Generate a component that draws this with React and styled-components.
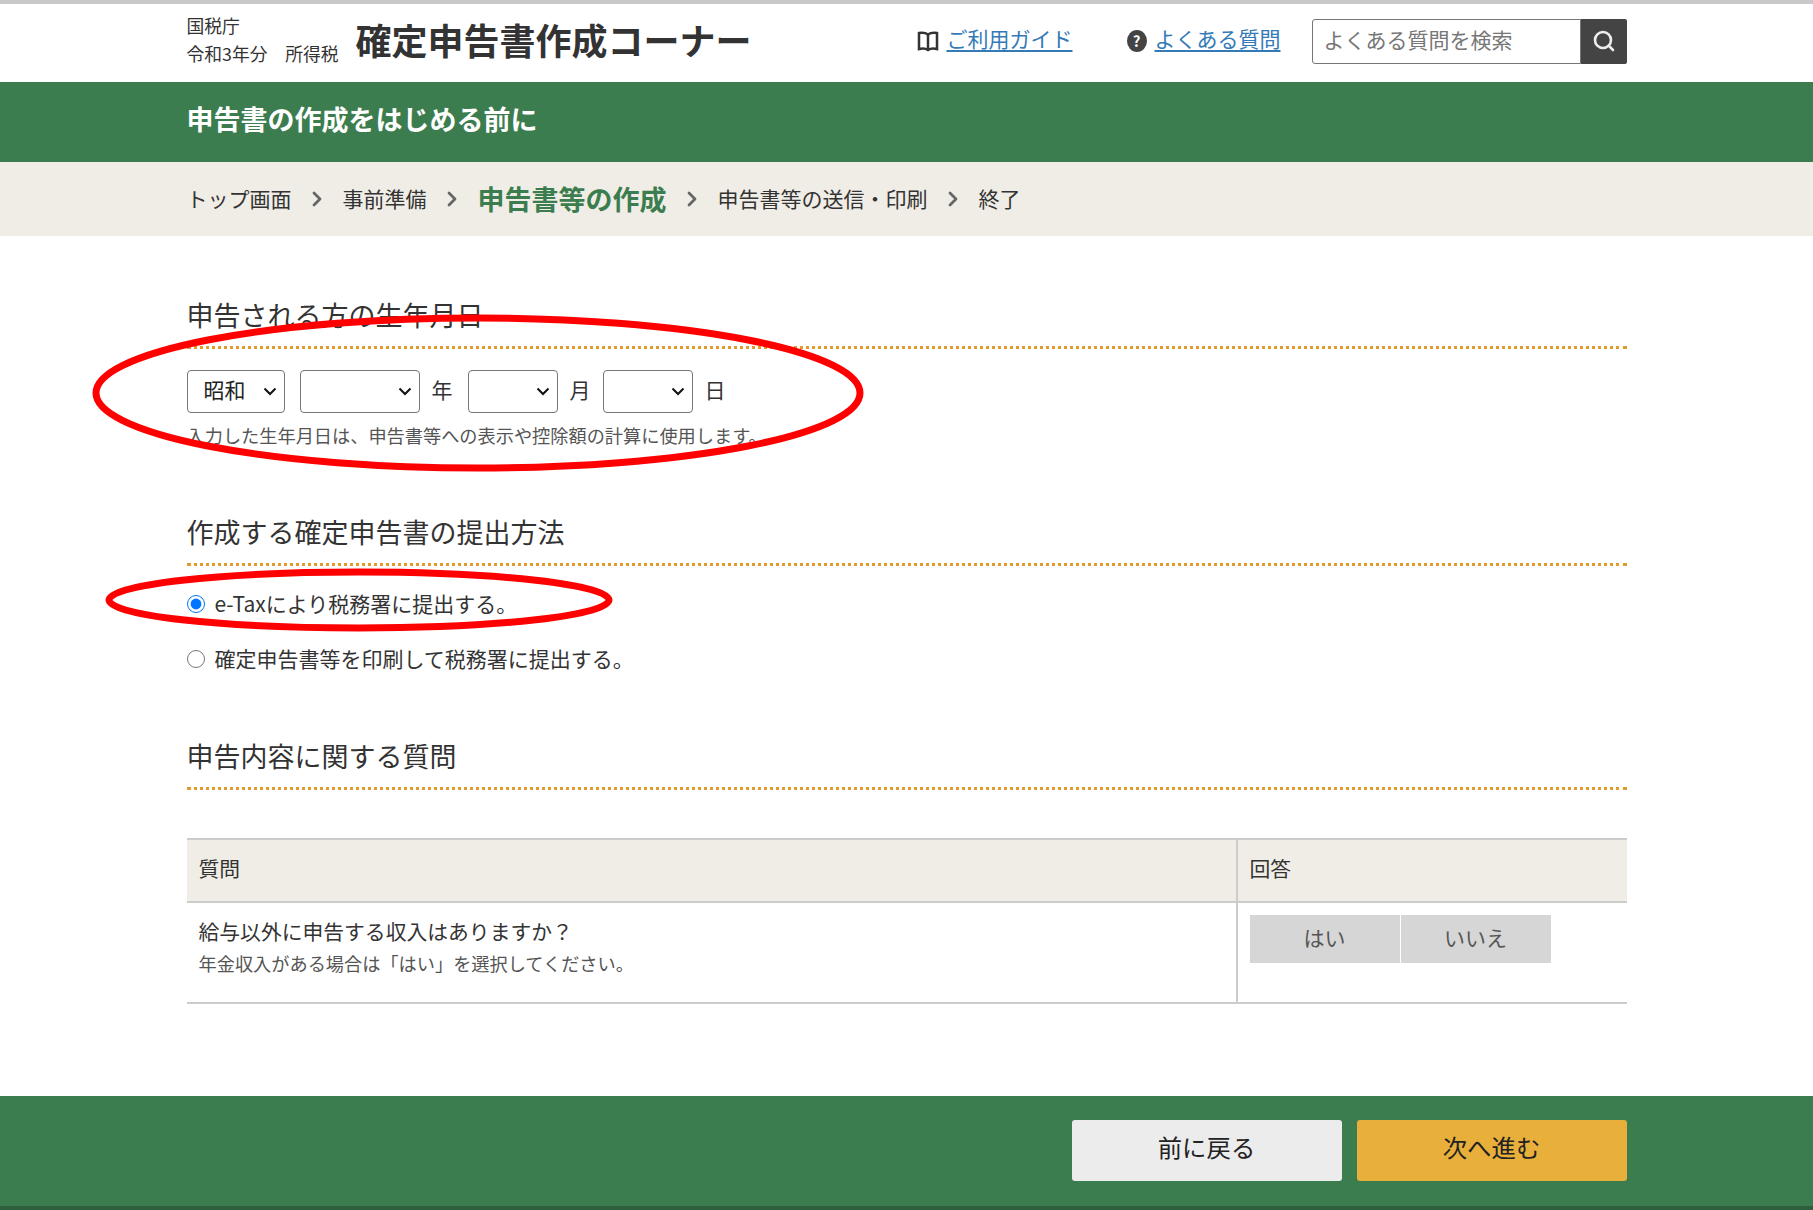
import React from 'react';
import styled, { createGlobalStyle } from 'styled-components';
import { ChevronRight, Search } from 'lucide-react';

const GlobalStyle = createGlobalStyle`
  html, body {
    margin: 0;
    padding: 0;
    background: #fff;
    color: #333;
    font-family: "Noto Sans CJK JP", "Noto Sans", sans-serif;
  }
  * { box-sizing: border-box; }
`;

const selectArrow = encodeURIComponent(
  '<svg xmlns="http://www.w3.org/2000/svg" width="14" height="9" viewBox="0 0 14 9"><path d="M1.500 1.500L7 7L12.500 1.500" fill="none" stroke="#111" stroke-width="2"/></svg>'
);

const Page = styled.div`
  position: relative;
  width: 1813px;
  height: 1210px;
  overflow: hidden;
  display: flex;
  flex-direction: column;
  border-top: 4px solid #c9c9c9;
`;

const Inner = styled.div`
  width: 1440px;
  margin: 0 auto;
`;

const HeaderBar = styled(Inner)`
  height: 78px;
  padding-bottom: 4px;
  display: flex;
  align-items: center;
`;

const Agency = styled.div`
  width: 169px;
  margin-bottom: 4px;
  font-size: 17.8px;
  line-height: 28px;
  white-space: pre;
  color: #333;
`;

const SiteTitle = styled.div`
  margin-bottom: 3px;
  font-size: 36px;
  font-weight: 700;
  line-height: 1.2;
  color: #333;
  white-space: nowrap;
`;

const HeaderLinks = styled.div`
  margin-left: auto;
  display: flex;
  align-items: center;
`;

const GuideLink = styled.a`
  display: flex;
  align-items: center;
  gap: ${(p) => p.$iconGap}px;
  margin-right: ${(p) => p.$gap}px;
  padding-bottom: 6px;
  font-size: 21px;
  line-height: 30px;
  color: #337ab7;

  span {
    text-decoration: underline;
    text-underline-offset: 3px;
    text-decoration-thickness: 2px;
  }

  svg, i {
    position: relative;
    top: 3px;
  }
`;

const HelpBadge = styled.i`
  width: 20px;
  height: 22px;
  border-radius: 50%;
  background: #444;
  color: #fff;
  font-size: 15px;
  font-style: normal;
  font-weight: 700;
  line-height: 21px;
  text-align: center;
`;

const SearchBox = styled.div`
  display: flex;
  height: 45px;
`;

const SearchInput = styled.input`
  width: 269px;
  height: 45px;
  padding: 0 11px 5px;
  border: 1px solid #767676;
  border-radius: 3px 0 0 3px;
  font: inherit;
  font-size: 21px;
  color: #333;

  &::placeholder {
    color: #777;
    opacity: 1;
  }
`;

const SearchButton = styled.button`
  width: 46px;
  height: 45px;
  padding: 0;
  border: 0;
  border-radius: 0 2px 2px 0;
  background: #444;
  color: #eee;
  display: flex;
  align-items: center;
  justify-content: center;
`;

const TitleBand = styled.div`
  height: 80px;
  background: #3c7d50;
  color: #fff;
`;

const BandInner = styled(Inner)`
  height: 100%;
  padding-bottom: 8px;
  display: flex;
  align-items: center;
  font-size: 27px;
  font-weight: 700;
`;

const CrumbBand = styled.div`
  height: 74px;
  background: #f0ede6;
`;

const CrumbRow = styled(Inner)`
  height: 100%;
  padding-bottom: 2px;
  display: flex;
  align-items: center;
  gap: 13.5px;
  font-size: 21px;
`;

const Crumb = styled.span`
  color: ${(p) => (p.$active ? '#3c7d50' : '#333')};
  font-size: ${(p) => (p.$active ? '27px' : '21px')};
  font-weight: ${(p) => (p.$active ? 700 : 400)};
  white-space: nowrap;
`;

const CrumbArrow = styled(ChevronRight)`
  color: #666;
  flex: none;
  position: relative;
  top: 1px;
`;

const Main = styled(Inner)`
  flex: 1;
  padding-top: 60px;
`;

const Section = styled.section`
  margin-bottom: ${(p) => p.$after}px;
`;

const Heading = styled.h2`
  margin: 0;
  height: 53px;
  padding-bottom: 13px;
  border-bottom: 3px dotted #e09a2e;
  font-size: 27px;
  font-weight: 400;
  line-height: 37px;
  color: #333;
`;

const DateRow = styled.div`
  display: flex;
  align-items: center;
  margin-top: 21px;
`;

const DateSelect = styled.select`
  appearance: none;
  width: ${(p) => p.$w}px;
  height: 43px;
  margin-right: ${(p) => p.$mr}px;
  padding: 0 0 6px 16px;
  border: 1px solid #767676;
  border-radius: 4px;
  background: #fff url("data:image/svg+xml,${selectArrow}") no-repeat right 7px center;
  font: inherit;
  font-size: 21px;
  color: #222;
`;

const DateUnit = styled.span`
  margin-right: ${(p) => p.$mr}px;
  padding-bottom: 6px;
  font-size: 21px;
`;

const Note = styled.p`
  margin: ${(p) => p.$top}px 0 0;
  font-size: 18.2px;
  line-height: 26px;
  color: #555;
`;

const RadioRow = styled.label`
  display: flex;
  align-items: center;
  height: 55px;
  font-size: 21px;
  color: #333;

  input {
    width: 18px;
    height: 18px;
    margin: 0 10px 0 0;
  }

  span {
    margin-bottom: 2px;
  }
`;

const RadioList = styled.div`
  margin-top: 10px;
`;

const QuestionTable = styled.div`
  display: grid;
  grid-template-columns: 1049px 1fr;
  margin-top: 48px;
  border-top: 2px solid #ccc;
  border-bottom: 2px solid #ccc;
`;

const HeadCell = styled.div`
  height: 63px;
  padding: 0 12px 5px;
  display: flex;
  align-items: center;
  background: #f0ede6;
  border-bottom: 2px solid #ccc;
  font-size: 20.8px;
  border-left: ${(p) => (p.$divider ? '2px solid #ccc' : '0')};
`;

const BodyCell = styled.div`
  height: 99px;
  padding: 12px;
  border-left: ${(p) => (p.$divider ? '2px solid #ccc' : '0')};
`;

const QuestionText = styled.div`
  font-size: 20.8px;
  line-height: 32px;
`;

const QuestionNote = styled.div`
  margin-top: 1px;
  font-size: 18.2px;
  line-height: 30px;
  color: #555;
`;

const AnswerGroup = styled.div`
  display: flex;
  gap: 1px;
`;

const AnswerButton = styled.button`
  width: 150px;
  height: 48px;
  border: 0;
  padding: 0 0 4px;
  background: #d6d6d6;
  color: #555;
  font: inherit;
  font-size: 21px;
`;

const Footer = styled.div`
  height: 114px;
  background: #3c7d50;
  border-bottom: 4px solid #2e5e3c;
`;

const FooterRow = styled(Inner)`
  height: 100%;
  display: flex;
  justify-content: flex-end;
  align-items: flex-start;
  gap: 15px;
  padding-top: 24px;
`;

const FooterButton = styled.button`
  width: 270px;
  height: 61px;
  padding: 0 0 8px;
  border: 0;
  border-radius: 3px;
  background: ${(p) => (p.$primary ? '#e9af3b' : '#ececec')};
  color: #222;
  font: inherit;
  font-size: 24.4px;
`;

const Annotations = styled.svg`
  position: absolute;
  left: 0;
  top: -4px;
  pointer-events: none;
`;

const BookIcon = () => (
  <svg width="22" height="22" viewBox="0 0 22 22" fill="none" stroke="#333" strokeWidth="2.5">
    <path d="M11 4.500C9 3 5.500 2.500 2 3V19C5.500 18 9 18.500 11 20C13 18.500 16.500 18 20 19V3C16.500 2.500 13 3 11 4.500Z" />
    <path d="M11 4.500V20" />
  </svg>
);

export default function App() {
  return (
    <Page>
      <GlobalStyle />
      <HeaderBar>
        <Agency>{'国税庁\n令和3年分　所得税'}</Agency>
        <SiteTitle>確定申告書作成コーナー</SiteTitle>
        <HeaderLinks>
          <GuideLink $gap={54} $iconGap={8}>
            <BookIcon />
            <span>ご利用ガイド</span>
          </GuideLink>
          <GuideLink $gap={31} $iconGap={8}>
            <HelpBadge>?</HelpBadge>
            <span>よくある質問</span>
          </GuideLink>
          <SearchBox>
            <SearchInput placeholder="よくある質問を検索" />
            <SearchButton>
              <Search size={24} strokeWidth={2.6} />
            </SearchButton>
          </SearchBox>
        </HeaderLinks>
      </HeaderBar>

      <TitleBand>
        <BandInner>申告書の作成をはじめる前に</BandInner>
      </TitleBand>

      <CrumbBand>
        <CrumbRow>
          <Crumb>トップ画面</Crumb>
          <CrumbArrow size={24} strokeWidth={2.8} />
          <Crumb>事前準備</Crumb>
          <CrumbArrow size={24} strokeWidth={2.8} />
          <Crumb $active>申告書等の作成</Crumb>
          <CrumbArrow size={24} strokeWidth={2.8} />
          <Crumb>申告書等の送信・印刷</Crumb>
          <CrumbArrow size={24} strokeWidth={2.8} />
          <Crumb>終了</Crumb>
        </CrumbRow>
      </CrumbBand>

      <Main>
        <Section $after={65}>
          <Heading>申告される方の生年月日</Heading>
          <DateRow>
            <DateSelect $w={98} $mr={15} defaultValue="昭和">
              <option>昭和</option>
              <option>平成</option>
            </DateSelect>
            <DateSelect $w={120} $mr={12}>
              <option></option>
            </DateSelect>
            <DateUnit $mr={15}>年</DateUnit>
            <DateSelect $w={90} $mr={12}>
              <option></option>
            </DateSelect>
            <DateUnit $mr={12}>月</DateUnit>
            <DateSelect $w={90} $mr={12}>
              <option></option>
            </DateSelect>
            <DateUnit $mr={0}>日</DateUnit>
          </DateRow>
          <Note $top={9}>入力した生年月日は、申告書等への表示や控除額の計算に使用します。</Note>
        </Section>

        <Section $after={51}>
          <Heading>作成する確定申告書の提出方法</Heading>
          <RadioList>
            <RadioRow>
              <input type="radio" name="method" defaultChecked />
              <span>e-Taxにより税務署に提出する。</span>
            </RadioRow>
            <RadioRow>
              <input type="radio" name="method" />
              <span>確定申告書等を印刷して税務署に提出する。</span>
            </RadioRow>
          </RadioList>
        </Section>

        <Section $after={0}>
          <Heading>申告内容に関する質問</Heading>
          <QuestionTable>
            <HeadCell>質問</HeadCell>
            <HeadCell $divider>回答</HeadCell>
            <BodyCell>
              <QuestionText>給与以外に申告する収入はありますか？</QuestionText>
              <QuestionNote>年金収入がある場合は「はい」を選択してください。</QuestionNote>
            </BodyCell>
            <BodyCell $divider>
              <AnswerGroup>
                <AnswerButton>はい</AnswerButton>
                <AnswerButton>いいえ</AnswerButton>
              </AnswerGroup>
            </BodyCell>
          </QuestionTable>
        </Section>
      </Main>

      <Footer>
        <FooterRow>
          <FooterButton>前に戻る</FooterButton>
          <FooterButton $primary>次へ進む</FooterButton>
        </FooterRow>
      </Footer>

      <Annotations width="1813" height="1210" fill="none" stroke="#ff0000" strokeWidth="7">
        <ellipse cx="478" cy="393" rx="382" ry="75" />
        <ellipse cx="359" cy="600" rx="250" ry="28" />
      </Annotations>
    </Page>
  );
}
